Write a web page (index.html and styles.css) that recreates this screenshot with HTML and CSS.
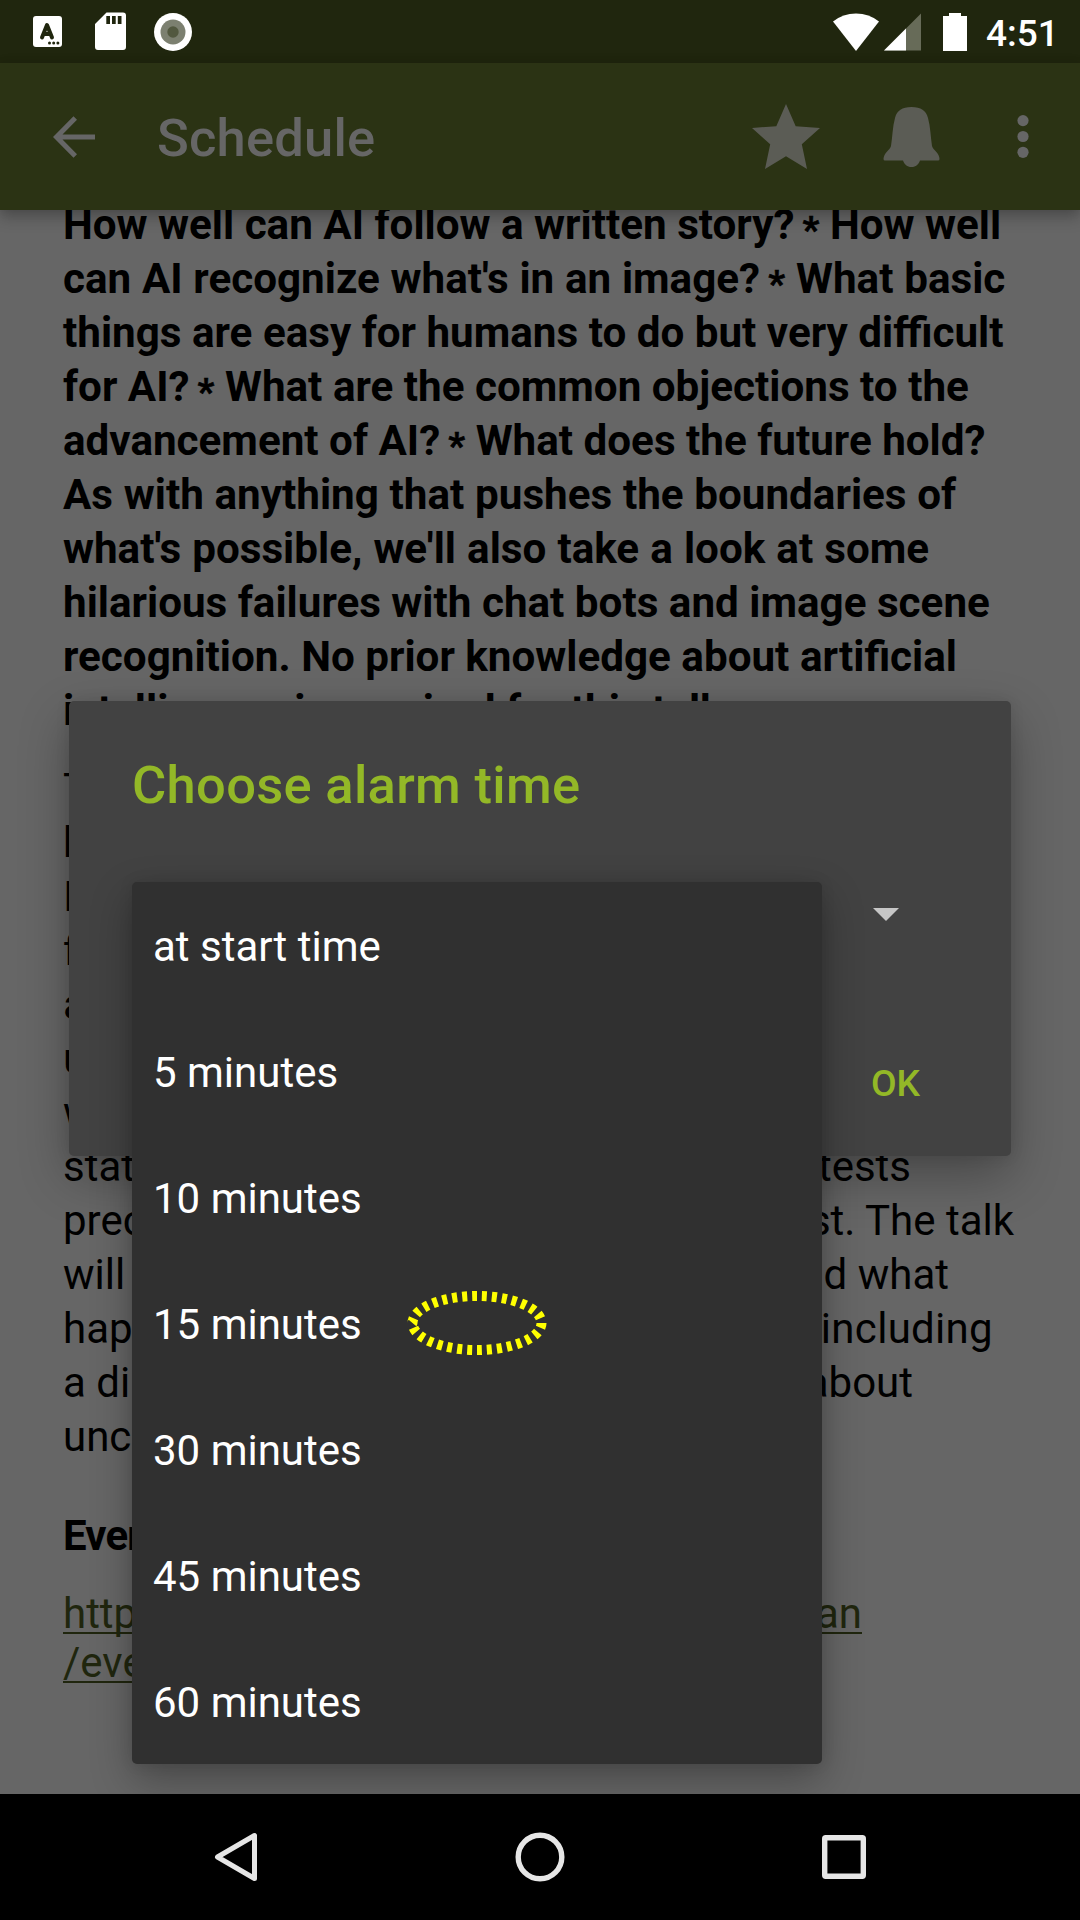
FILE: index.html
```html
<!DOCTYPE html>
<html lang="en">
<head>
<meta charset="utf-8">
<title>Schedule</title>
<link rel="stylesheet" href="styles.css">
</head>
<body>
<div class="screen">
  <header class="status-bar">
    <div class="status-left">
      <svg width="29" height="31" viewBox="0 0 29 31"><rect width="29" height="31" rx="3" fill="#fff"/><path d="M9 21.500L14 9l5 12.500M10.700 18h6.600" fill="none" stroke="#20260e" stroke-width="4" stroke-linejoin="round" stroke-linecap="round"/><g fill="#20260e"><circle cx="16.500" cy="27" r="1.500"/><circle cx="20.700" cy="27" r="1.500"/><circle cx="24.900" cy="27" r="1.500"/></g></svg>
      <svg width="31" height="39" viewBox="0 0 31 39"><path d="M11.500 0.500H28a3 3 0 0 1 3 3V35a3 3 0 0 1-3 3H3a3 3 0 0 1-3-3V12z" fill="#fff"/><path d="M11.300 4h3.700v8h-3.700zM17 4h3.700v8H17zM22.800 4h3.700v8h-3.700z" fill="#20260e"/></svg>
      <svg width="38" height="38" viewBox="0 0 38 38"><circle cx="19" cy="19" r="19" fill="#fff"/><circle cx="19" cy="19" r="12.500" fill="#7c8070"/><circle cx="19" cy="19" r="5.700" fill="#52583f"/></svg>
    </div>
    <div class="status-right">
      <svg width="46" height="38" viewBox="0 0 46 38"><path d="M0 8.500Q10 0.500 23 0.500T46 8.500L23 38z" fill="#fff"/></svg>
      <svg class="signal" width="37" height="38" viewBox="0 0 37 38"><path d="M0 37.500L37 0.500v37z" fill="#676b58"/><path d="M0 37.500L22 15.500v22z" fill="#fff"/></svg>
      <svg class="battery" width="24" height="38" viewBox="0 0 24 38"><path d="M6 0h12v3h6v35H0V3h6z" fill="#fff"/></svg>
      <span class="clock">4:51</span>
    </div>
  </header>
  <nav class="toolbar">
    <svg class="back" width="42" height="42" viewBox="0 0 42 42"><path d="M42 18.500H9.500L24 3.800 20.500 0.300 0 21l20.500 20.700 3.500-3.500L9.500 23.500H42z" fill="#666"/></svg>
    <h1 class="toolbar-title">Schedule</h1>
    <svg class="star" width="68" height="65" viewBox="0 0 68 65"><path d="M34 0l9.700 22.200L68 24 49.800 40.300 55 65 34 52.300 13 65l5.200-24.700L0 24l24.300-1.800z" fill="#5b5c55"/></svg>
    <svg class="bell" width="57" height="60" viewBox="0 0 57 60"><path d="M28.500 0C38 0 43 3.500 45 11c2.500 9 2.500 18 4 28 1 4 7.500 7 7.500 13q0 1.500-1.500 1.500H37C35.500 57.500 33 60 28.500 60S21.500 57.500 20 53.500H2Q.5 53.500.5 52C.5 46 7 43 8 39c1.500-10 1.500-19 4-28C14 3.500 19 0 28.500 0z" fill="#5b5c55"/></svg>
    <svg class="more" width="12" height="43" viewBox="0 0 12 43"><g fill="#666"><circle cx="6" cy="5.600" r="5.600"/><circle cx="6" cy="21.500" r="5.600"/><circle cx="6" cy="37.300" r="5.600"/></g></svg>
  </nav>
  <main class="content">
    <p class="abstract">How well can AI follow a written story? <span class="star-mark">*</span> How well<br><span class="loose">can AI recognize what's in an image? <span class="star-mark">*</span> What basic</span><br>things are easy for humans to do but very difficult<br>for AI? <span class="star-mark">*</span> What are the common objections to the<br>advancement of AI? <span class="star-mark">*</span> What does the future hold?<br><span class="loose">As with anything that pushes the boundaries of</span><br><span class="looser">what's possible, we'll also take a look at some</span><br>hilarious failures with chat bots and image scene<br>recognition. No prior knowledge about artificial<br>intelligence is required for this talk.</p>
    <div class="description">
      <div class="line">T</div>
      <div class="line">h</div>
      <div class="line">I</div>
      <div class="line">f</div>
      <div class="line">a</div>
      <div class="line">u</div>
      <div class="line">w</div>
      <div class="line"><span class="head">stat</span><span class="tail tail-tests">tests</span></div>
      <div class="line"><span class="head">prec</span><span class="tail tail-talk">st. The talk</span></div>
      <div class="line"><span class="head">will</span><span class="tail tail-what">d what</span></div>
      <div class="line"><span class="head">hap</span><span class="tail tail-including">including</span></div>
      <div class="line"><span class="head">a di</span><span class="tail tail-about">about</span></div>
      <div class="line">unc</div>
    </div>
    <h2 class="section">Even</h2>
    <a class="link"><span class="link-row link-first"><span>http</span><span>an</span></span><span class="link-row link-second">/eve</span></a>
  </main>
  <footer class="nav-bar">
    <svg width="44" height="50" viewBox="0 0 44 50"><path d="M40.500 3.500v43L3.500 25z" fill="none" stroke="#e6e6e6" stroke-width="5" stroke-linejoin="round"/></svg>
    <svg width="50" height="50" viewBox="0 0 50 50"><circle cx="25" cy="25" r="21.800" fill="none" stroke="#e6e6e6" stroke-width="5.400"/></svg>
    <svg width="44" height="44" viewBox="0 0 44 44"><rect x="2.700" y="2.700" width="38.600" height="38.600" rx="1" fill="none" stroke="#e6e6e6" stroke-width="5.400"/></svg>
  </footer>

  <section class="dialog">
    <h2 class="dialog-title">Choose alarm time</h2>
    <svg class="caret" width="26" height="13" viewBox="0 0 26 13"><path d="M0 0h26L13 13z" fill="#c6c6c6"/></svg>
    <span class="ok">OK</span>
  </section>
  <ul class="menu">
    <li>at start time</li>
    <li>5 minutes</li>
    <li>10 minutes</li>
    <li>15 minutes</li>
    <li>30 minutes</li>
    <li>45 minutes</li>
    <li>60 minutes</li>
  </ul>
  <svg class="marker" width="140" height="66" viewBox="0 0 140 66"><ellipse cx="70" cy="33" rx="64.500" ry="27" fill="none" stroke="#ff0" stroke-width="10" pathLength="300" stroke-dasharray="5 5"/></svg>
</div>
</body>
</html>
```
FILE: styles.css
```css
* { box-sizing: border-box; }
body { margin: 0; }
svg { display: block; flex: none; }

.screen {
  position: relative;
  width: 1080px;
  height: 1920px;
  overflow: hidden;
  display: flex;
  flex-direction: column;
  background: #666;
  color: #000;
  font: 400 42px/54px Roboto, sans-serif;
}

.status-bar {
  height: 63px;
  display: flex;
  justify-content: space-between;
  padding: 0 24px 0 33px;
  background: #20260e;
  position: relative;
  z-index: 1;
}
.status-left, .status-right { display: flex; align-items: center; }
.status-left { gap: 33px; }
.status-left svg:nth-child(3) { margin-left: -5px; }
.signal { margin-left: 5px; }
.battery { margin-left: 22px; }
.clock {
  width: 70px;
  margin-left: 19px;
  color: #fff;
  font-weight: 500;
  font-size: 37px;
  line-height: 63px;
  padding-top: 4px;
}

.toolbar {
  height: 147px;
  display: flex;
  align-items: center;
  padding: 0 51px 0 53px;
  background: #2b3314;
  box-shadow: 0 8px 14px rgba(0, 0, 0, .22), 0 0 10px rgba(0, 0, 0, .12);
  position: relative;
  z-index: 1;
}
.toolbar-title {
  margin: 0 auto 0 62px;
  color: #666;
  font-weight: 500;
  font-size: 52.5px;
  line-height: 62px;
  letter-spacing: .2px;
  padding-top: 3px;
}
.bell { margin-left: 63px; }
.more { margin-left: 77px; }

.content {
  flex: 1;
  min-height: 0;
  margin-top: -12px;
  padding: 0 63px;
  white-space: nowrap;
}
.abstract { margin: 0 0 24px; font-weight: 700; font-size: 42.2px; }
.star-mark {
  display: inline-block;
  width: 17px;
  margin-left: -2.5px;
  font-size: 37px;
  line-height: 20px;
  vertical-align: -3px;
  -webkit-text-stroke: .6px #000;
}
.loose { word-spacing: .25px; }
.looser { word-spacing: .6px; }
.line { display: flex; }
.head { width: 80px; }
.tail { margin-left: auto; }
.tail-tests { margin-right: 106px; }
.tail-talk { margin-right: 3px; }
.tail-what { margin-right: 68px; }
.tail-including { margin-right: 24px; letter-spacing: .3px; }
.tail-about { margin-right: 104px; }
.section { margin: 45px 0 0; font-size: 42px; font-weight: 700; letter-spacing: -.8px; }
.link { display: block; margin-top: 26px; color: #20260e; line-height: 49px; }
.link-row { display: flex; justify-content: space-between; border-bottom: 2px solid #20260e; }
.link-first { width: 799px; height: 45px; }
.link-second { width: 81px; height: 45px; margin-top: 4px; }

.nav-bar {
  height: 126px;
  display: flex;
  align-items: center;
  justify-content: space-between;
  padding: 0 214px;
  background: #000;
  position: relative;
  z-index: 4;
}

.dialog {
  position: absolute;
  z-index: 2;
  left: 69px;
  top: 701px;
  width: 942px;
  height: 455px;
  border-radius: 5px;
  background: #424242;
  color: #93b827;
  box-shadow: 0 20px 50px rgba(0, 0, 0, .3), 0 0 14px rgba(0, 0, 0, .1);
  padding: 53px 63px 0;
  display: flex;
  flex-direction: column;
}
.dialog-title { margin: 0; font-weight: 500; font-size: 52.5px; line-height: 62px; letter-spacing: .3px; white-space: nowrap; }
.caret { margin: 92px 49px 0 auto; }
.ok { margin: 133px 28px 0 auto; font-weight: 500; font-size: 37.2px; line-height: 58px; }

.menu {
  position: absolute;
  z-index: 3;
  left: 132px;
  top: 882px;
  width: 690px;
  margin: 0;
  padding: 0;
  list-style: none;
  border-radius: 5px;
  background: #303030;
  color: #fff;
  box-shadow: 0 16px 42px rgba(0, 0, 0, .3), 0 0 14px rgba(0, 0, 0, .1);
}
.menu li { height: 126px; padding: 2px 0 0 21px; line-height: 126px; }

.marker { position: absolute; z-index: 4; left: 407px; top: 1290px; }
```
